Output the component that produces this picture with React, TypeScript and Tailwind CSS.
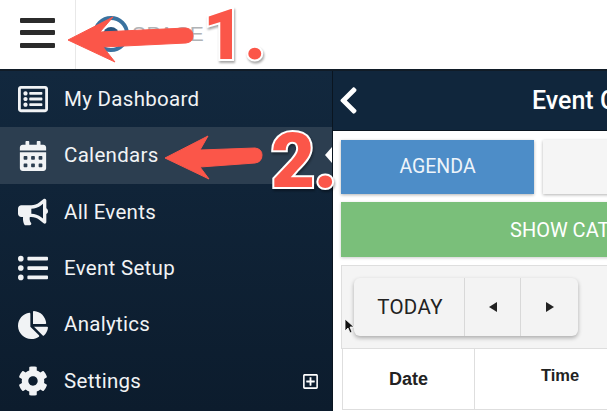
import { FaRegListAlt, FaCalendarAlt, FaBullhorn, FaListUl, FaChartPie, FaCog, FaRegPlusSquare, FaChevronLeft } from "react-icons/fa";

const items = [
  { label: "My Dashboard", Icon: FaRegListAlt, active: false },
  { label: "Calendars", Icon: FaCalendarAlt, active: true },
  { label: "All Events", Icon: FaBullhorn, active: false },
  { label: "Event Setup", Icon: FaListUl, active: false },
  { label: "Analytics", Icon: FaChartPie, active: false },
  { label: "Settings", Icon: FaCog, active: false },
];

export default function App() {
  return (
    <div className="relative w-[607px] h-[411px] overflow-hidden bg-white font-['Roboto',sans-serif]">
      <header className="h-[71px] flex border-b-2 border-[#111c27] bg-white">
        <div className="w-[76px] shrink-0 border-r border-[#e8e8e8] flex flex-col justify-center gap-[7.5px] pl-[20px] pb-[4px]">
          <span className="block w-[35px] h-[5px] bg-[#2b2b2b] rounded-[1px]" />
          <span className="block w-[35px] h-[5px] bg-[#2b2b2b] rounded-[1px]" />
          <span className="block w-[35px] h-[5px] bg-[#2b2b2b] rounded-[1px]" />
        </div>
        <div className="flex items-center pl-[16px] pb-[2px] gap-[2px]">
          <svg width="38" height="38" viewBox="0 0 38 38">
            <circle cx="19" cy="19" r="16" fill="#fff" stroke="#3a729f" strokeWidth="4" />
            <circle cx="19" cy="20" r="8" fill="#27557f" />
          </svg>
          <span className="text-[21px] text-[#b0b3b6] tracking-[0.5px] font-['Liberation_Sans',sans-serif]">SPACE</span>
        </div>
      </header>

      <div className="flex h-[340px]">
        <nav className="w-[333px] shrink-0 bg-gradient-to-b from-[#12283e] to-[#0c1c2d] border-r border-[#0a1520]">
          {items.map(({ label, Icon, active }) => (
            <div key={label} className={`relative h-[56.4px] flex items-center pl-[18px] text-[#f1f3f5] ${active ? "bg-[#2c3e50]" : ""}`}>
              <span className="w-[30px] flex justify-center text-[30px]">
                <Icon />
              </span>
              <span className="ml-[16px] text-[20.5px] tracking-[0.3px]">{label}</span>
              {label === "Settings" && <FaRegPlusSquare className="absolute left-[302px] top-[20px] text-[17px] text-white" />}
              {active && <span className="absolute right-0 top-[20px] w-0 h-0 border-y-[8px] border-y-transparent border-r-[7px] border-r-white" />}
            </div>
          ))}
        </nav>

        <main className="flex-1 min-w-0 flex flex-col">
          <div className="h-[60px] shrink-0 bg-[#10263c] border-b border-[#0a1520] flex items-center text-white overflow-hidden">
            <FaChevronLeft className="shrink-0 text-[31px]" />
            <span className="ml-[168px] text-[25px] font-medium whitespace-nowrap">Event Calendars</span>
          </div>
          <div className="flex-1 min-h-0 bg-white pt-[9px] pl-[8px] overflow-hidden">
            <div className="flex gap-[9px] w-[400px]">
              <div className="w-[193px] h-[54px] shrink-0 bg-[#4d8dc8] text-[#eef4fa] text-[19.5px] flex items-center justify-center shadow-[0_1px_3px_rgba(0,0,0,0.3)]">AGENDA</div>
              <div className="w-[193px] h-[54px] shrink-0 bg-[#f5f5f5] shadow-[0_1px_3px_rgba(0,0,0,0.3)]" />
            </div>
            <div className="mt-[8px] w-[400px] h-[55px] bg-[#7abf7a] text-white text-[20px] flex items-center pl-[169px] whitespace-nowrap shadow-[0_1px_3px_rgba(0,0,0,0.2)]">SHOW CATEGORIES</div>
            <div className="mt-[8px] w-[400px] h-[84px] bg-[#f4f4f4] border border-[#dedede] pt-[12px] pl-[12px]">
              <div className="flex w-[224px] h-[58px] bg-[#f3f3f3] rounded-[6px] shadow-[0_2px_4px_rgba(0,0,0,0.3)] text-[#222]">
                <div className="w-[111px] flex items-center justify-center pl-[2px] text-[20.5px] border-r border-[#d8d8d8] tracking-[0.3px]">TODAY</div>
                <div className="w-[56px] flex items-center justify-center border-r border-[#d8d8d8]">
                  <span className="w-0 h-0 border-y-[5.5px] border-y-transparent border-r-[8px] border-r-[#222]" />
                </div>
                <div className="flex-1 flex items-center justify-center">
                  <span className="w-0 h-0 border-y-[5.5px] border-y-transparent border-l-[8px] border-l-[#222]" />
                </div>
              </div>
            </div>
            <div className="ml-[1px] w-[400px] flex h-[61px] border-l border-b border-[#dedede] text-[#222] font-bold font-['Liberation_Sans',sans-serif]">
              <div className="w-[132px] border-r border-[#dedede] flex items-center justify-center text-[18px]">Date</div>
              <div className="w-[170px] flex items-center justify-center pb-[7px] text-[16.5px]">Time</div>
            </div>
          </div>
        </main>
      </div>

      {/* annotations */}
      <svg className="absolute inset-0" width="607" height="411" viewBox="0 0 607 411" fill="#fb5649">
        <path d="M68 40 L113 17 L100 32 L186 28 Q193 29 193 36 Q193 42 186 43 L103 47 L115 62 Z" stroke="#fb5649" strokeLinejoin="round" />
        <path d="M165 158 L208 136 L200 150 L255 148 Q262 149 262 155 Q262 162 255 163 L200 167 L209 179 Z" stroke="#fb5649" strokeLinejoin="round" />
      </svg>
      <span className="absolute left-[203px] top-[-7px] text-[71px] leading-[84px] font-black text-[#fb5649] [-webkit-text-stroke:4px_#fff] [paint-order:stroke_fill] drop-shadow-[1px_2px_1px_rgba(0,0,0,0.35)]">1.</span>
      <span className="absolute left-[271px] top-[119px] text-[76px] leading-[84px] font-black tracking-[-1px] text-[#fb5649] [-webkit-text-stroke:4px_#fff] [paint-order:stroke_fill] drop-shadow-[1px_2px_1px_rgba(0,0,0,0.35)]">2.</span>
      <svg className="absolute left-[344px] top-[318px]" width="12" height="18" viewBox="0 0 12 18">
        <path d="M1 1 L1 13 L4 10 L6 15 L8 14 L6 9 L10 9 Z" fill="#111" stroke="#fff" strokeWidth="0.8" />
      </svg>
    </div>
  );
}
